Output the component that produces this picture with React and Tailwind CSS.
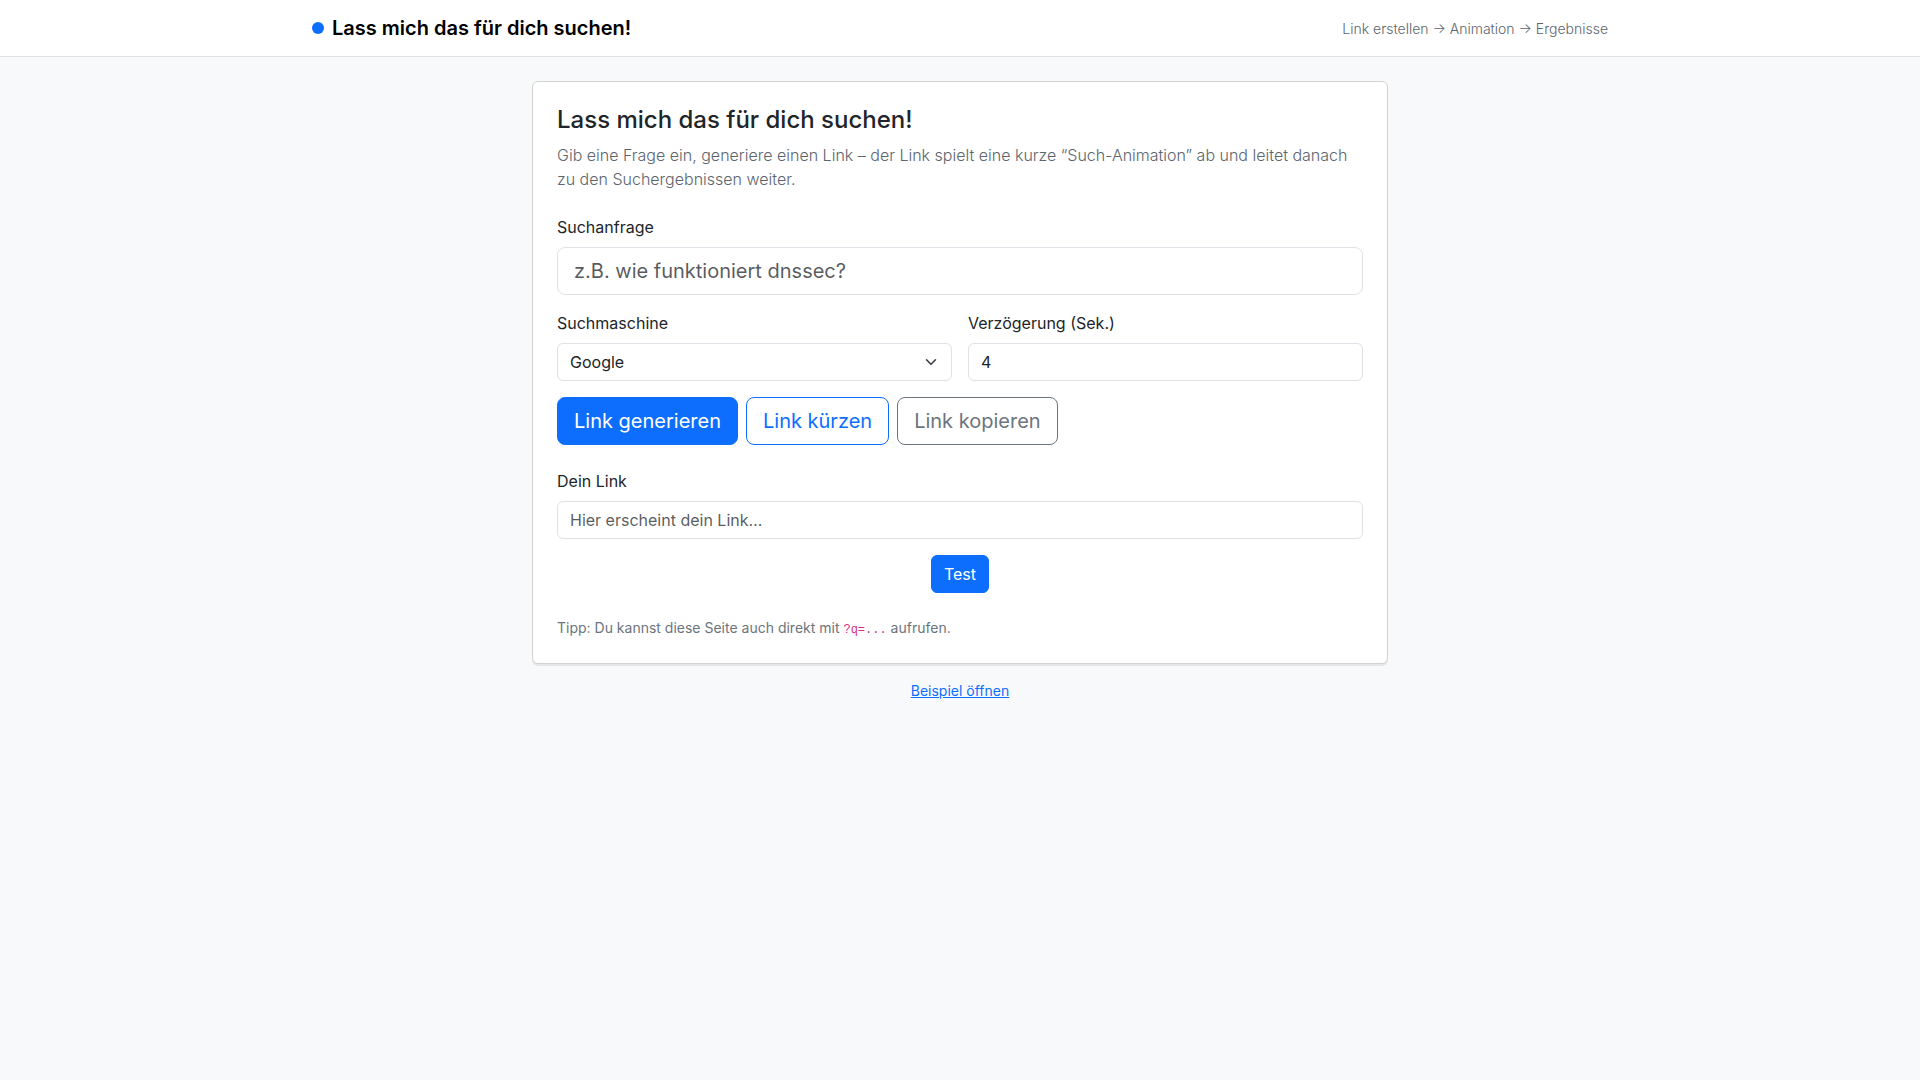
const labelClass = "mb-2 block text-base leading-6";
const controlClass =
  "block h-[38px] w-full rounded-md border border-[#dee2e6] bg-white px-3 text-base text-[#212529] placeholder:text-[#212529]/75 focus:outline-2 focus:outline-[#86b7fe]";
const largeButtonClass = "h-12 rounded-lg border px-4 text-xl leading-[30px]";

function Header() {
  return (
    <header className="border-b border-[#dee2e6] bg-white">
      <div className="mx-auto flex h-14 max-w-[1320px] items-center justify-between px-3">
        <a href="#" className="flex items-center gap-2 text-xl leading-[30px] font-semibold text-black">
          <span className="size-3 rounded-full bg-[#0d6efd]" />
          Lass mich das für dich suchen!
        </a>
        <span className="pt-0.5 text-sm leading-6 font-light text-[#5c656d]">Link erstellen → Animation → Ergebnisse</span>
      </div>
    </header>
  );
}

function EngineSelect() {
  return (
    <div className="flex-1">
      <label htmlFor="engine" className={labelClass}>Suchmaschine</label>
      <div className="relative">
        <select id="engine" defaultValue="google" className={`${controlClass} appearance-none pr-9`}>
          <option value="google">Google</option>
          <option value="duckduckgo">DuckDuckGo</option>
          <option value="bing">Bing</option>
        </select>
        <svg
          viewBox="0 0 16 16"
          className="pointer-events-none absolute top-[13px] right-[15px] size-3"
          fill="none"
          stroke="#343a40"
          strokeWidth="2"
          strokeLinecap="round"
          strokeLinejoin="round"
          aria-hidden="true"
        >
          <path d="m2 5 6 6 6-6" />
        </svg>
      </div>
    </div>
  );
}

export default function App() {
  return (
    <div className="min-h-screen bg-[#f8f9fa] font-[Inter,sans-serif] text-base text-[#212529]">
      <Header />
      <main className="mx-auto max-w-[880px] px-3 py-6">
        <section className="rounded-md border border-[#d2d2d2] bg-white p-6 shadow-[0_2px_0_rgba(0,0,0,0.075)]">
          <h1 className="mb-[9px] text-2xl leading-7 font-medium">Lass mich das für dich suchen!</h1>
          <p className="mb-6 leading-6 font-light text-[#5c656d]">
            Gib eine Frage ein, generiere einen Link – der Link spielt eine kurze “Such-Animation” ab und leitet danach zu
            den Suchergebnissen weiter.
          </p>

          <form onSubmit={(e) => e.preventDefault()}>
            <label htmlFor="query" className={labelClass}>Suchanfrage</label>
            <input
              id="query"
              type="text"
              placeholder="z.B. wie funktioniert dnssec?"
              className="block h-12 w-full rounded-lg border border-[#dee2e6] bg-white px-4 text-xl placeholder:text-[#212529]/75 focus:outline-2 focus:outline-[#86b7fe]"
            />
            <div className="mt-4 flex gap-4">
              <EngineSelect />
              <div className="flex-1">
                <label htmlFor="delay" className={labelClass}>Verzögerung (Sek.)</label>
                <input id="delay" type="number" min="0" defaultValue="4" className={controlClass} />
              </div>
            </div>
            <div className="mt-4 flex flex-wrap gap-2">
              <button type="submit" className={`${largeButtonClass} border-[#0d6efd] bg-[#0d6efd] text-white`}>
                Link generieren
              </button>
              <button type="button" className={`${largeButtonClass} border-[#0d6efd] text-[#0d6efd]`}>
                Link kürzen
              </button>
              <button type="button" className={`${largeButtonClass} border-[#6c757d] text-[#6c757d]`}>
                Link kopieren
              </button>
            </div>
          </form>

          <div className="mt-6">
            <label htmlFor="result" className={labelClass}>Dein Link</label>
            <input id="result" type="text" readOnly placeholder="Hier erscheint dein Link…" className={controlClass} />
          </div>
          <div className="mt-4 flex justify-center">
            <button type="button" className="h-[38px] rounded-md border border-[#0d6efd] bg-[#0d6efd] px-3 text-base text-white">
              Test
            </button>
          </div>
          <p className="mt-6 text-sm leading-[22px] text-[#6c757d]">
            Tipp: Du kannst diese Seite auch direkt mit{" "}
            <code className="font-['Liberation_Mono',monospace] text-xs text-[#d63384]">?q=...</code> aufrufen.
          </p>
        </section>
        <p className="mt-4 text-center text-sm leading-[22px]">
          <a href="#" className="text-[#0d6efd] underline">Beispiel öffnen</a>
        </p>
      </main>
    </div>
  );
}
